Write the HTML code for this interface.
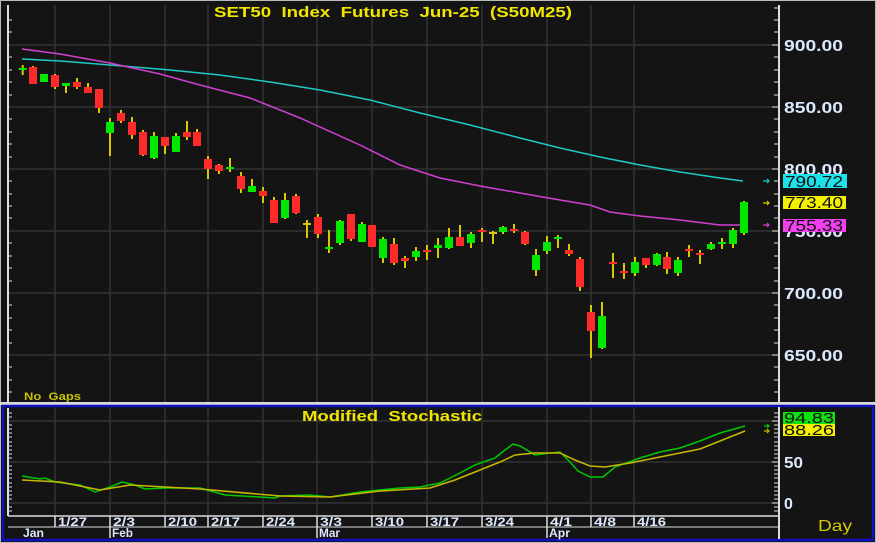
<!DOCTYPE html>
<html><head><meta charset="utf-8"><style>
html,body{margin:0;padding:0;background:#141414;}
svg{display:block;font-family:"Liberation Sans",Arial,sans-serif;font-weight:bold;}
</style></head><body>
<svg width="876" height="543" viewBox="0 0 876 543" xmlns="http://www.w3.org/2000/svg">
<rect width="876" height="543" fill="#141414"/>
<rect x="0.5" y="0.5" width="875" height="542" fill="none" stroke="#bbb"/>
<g stroke="#333" stroke-width="1.5">
<line x1="8" y1="45" x2="779" y2="45"/><line x1="8" y1="107" x2="779" y2="107"/><line x1="8" y1="169" x2="779" y2="169"/><line x1="8" y1="231" x2="779" y2="231"/><line x1="8" y1="293" x2="779" y2="293"/><line x1="8" y1="355" x2="779" y2="355"/>
<line x1="55" y1="5" x2="55" y2="403"/><line x1="110" y1="5" x2="110" y2="403"/><line x1="165" y1="5" x2="165" y2="403"/><line x1="208" y1="5" x2="208" y2="403"/><line x1="263" y1="5" x2="263" y2="403"/><line x1="317" y1="5" x2="317" y2="403"/><line x1="372" y1="5" x2="372" y2="403"/><line x1="427" y1="5" x2="427" y2="403"/><line x1="482" y1="5" x2="482" y2="403"/><line x1="547" y1="5" x2="547" y2="403"/><line x1="591" y1="5" x2="591" y2="403"/><line x1="634" y1="5" x2="634" y2="403"/>
</g>
<line x1="8" y1="5" x2="8" y2="403" stroke="#ddd" stroke-width="2"/>
<line x1="779" y1="5" x2="779" y2="403" stroke="#ddd" stroke-width="2"/>
<g stroke="#ddd" stroke-width="1">
<path d="M8 20h4M8 32h4M8 57h4M8 70h4M8 82h4M8 95h4M8 119h4M8 132h4M8 144h4M8 157h4M8 181h4M8 194h4M8 206h4M8 218h4M8 243h4M8 256h4M8 268h4M8 281h4M8 305h4M8 318h4M8 330h4M8 343h4M8 367h4M8 380h4M8 392h4"/>
<path d="M774 8h5M774 20h5M774 32h5M772 45h7M774 57h5M774 70h5M774 82h5M774 95h5M772 107h7M774 119h5M774 132h5M774 144h5M774 157h5M772 169h7M774 181h5M774 194h5M774 206h5M774 218h5M772 231h7M774 243h5M774 256h5M774 268h5M774 281h5M772 293h7M774 305h5M774 318h5M774 330h5M774 343h5M772 355h7M774 367h5M774 380h5M774 392h5"/>
</g>
<text x="214" y="17" fill="#f2e600" font-size="15" textLength="358" lengthAdjust="spacingAndGlyphs" style="white-space:pre">SET50  Index  Futures  Jun-25  (S50M25)</text>
<g fill="#dde8ff" font-size="16">
<text x="784" y="51" textLength="59" lengthAdjust="spacingAndGlyphs">900.00</text><text x="784" y="113" textLength="59" lengthAdjust="spacingAndGlyphs">850.00</text><text x="784" y="175" textLength="59" lengthAdjust="spacingAndGlyphs">800.00</text><text x="784" y="237" textLength="59" lengthAdjust="spacingAndGlyphs">750.00</text><text x="784" y="299" textLength="59" lengthAdjust="spacingAndGlyphs">700.00</text><text x="784" y="361" textLength="59" lengthAdjust="spacingAndGlyphs">650.00</text>
</g>
<text x="24" y="400" fill="#c8c000" font-size="11" textLength="57" lengthAdjust="spacingAndGlyphs" style="white-space:pre">No  Gaps</text>
<polyline fill="none" stroke="#20c8c8" stroke-width="1.5" points="22,59 60,61 110,65 170,70 220,75 270,82 320,90 370,100 420,113 470,125 520,138 560,148 600,157 640,165 680,172 720,178 743,181"/>
<polyline fill="none" stroke="#d040d0" stroke-width="1.5" points="22,49 60,54 110,63 160,74 200,85 250,98 300,118 360,145 400,165 440,178 480,186 520,193 560,200 590,205 610,212 640,216 680,220 720,225 743,225"/>
<g stroke="#d8c800" stroke-width="2">
<path d="M22.7 65V75M33 66V84M44 74V82M55 74V89M66 83V93M77 78V89M88 83V93M99 89V113M110 118V156M121 110V123M132 117V139M143 130V156M154 132V159M165 137V154M176 133V152M187 121V140M197 129V146M208 156V179M219 164V174M230 158V172M241 172V193M252 179V192M263 187V203M274 197V223M285 193V219M296 194V214M307 220V238M318 214V238M329 230V253M340 220V245M351 214V241M362 222V242M372 225V247M383 237V263M394 238V265M405 256V268M416 247V261M427 245V260M438 238V258M449 228V249M460 225V246M471 232V248M482 228V242M493 231V244M503 226V234M514 224V233M525 231V245M536 249V276M547 236V254M558 235V248M569 244V256M580 257V291M591 305V358M602 302V349M613 253V278M624 263V279M635 257V276M646 258V268M657 253V266M667 252V274M678 257V276M689 245V257M700 250V264M711 242V250M722 238V249M733 228V248M744 201V235"/>
</g>
<g fill="#00e800">
<rect x="18.7" y="68" width="8" height="2"/><rect x="40" y="74" width="8" height="8"/><rect x="62" y="83" width="8" height="3"/><rect x="106" y="122" width="8" height="11"/><rect x="150" y="136" width="8" height="22"/><rect x="172" y="136" width="8" height="16"/><rect x="226" y="167" width="8" height="2"/><rect x="248" y="186" width="8" height="6"/><rect x="281" y="200" width="8" height="18"/><rect x="325" y="247" width="8" height="2"/><rect x="336" y="221" width="8" height="22"/><rect x="358" y="224" width="8" height="18"/><rect x="379" y="239" width="8" height="19"/><rect x="412" y="251" width="8" height="6"/><rect x="434" y="245" width="8" height="3"/><rect x="445" y="237" width="8" height="11"/><rect x="467" y="234" width="8" height="9"/><rect x="499" y="227" width="8" height="5"/><rect x="532" y="255" width="8" height="15"/><rect x="543" y="242" width="8" height="9"/><rect x="554" y="237" width="8" height="2"/><rect x="598" y="316" width="8" height="32"/><rect x="631" y="262" width="8" height="11"/><rect x="653" y="254" width="8" height="11"/><rect x="674" y="260" width="8" height="13"/><rect x="707" y="244" width="8" height="5"/><rect x="718" y="242" width="8" height="2"/><rect x="729" y="230" width="8" height="14"/><rect x="740" y="202" width="8" height="31"/>
</g>
<g fill="#ff2a2a">
<rect x="29" y="67" width="8" height="17"/><rect x="51" y="75" width="8" height="12"/><rect x="73" y="82" width="8" height="5"/><rect x="84" y="87" width="8" height="6"/><rect x="95" y="89" width="8" height="19"/><rect x="117" y="113" width="8" height="8"/><rect x="128" y="122" width="8" height="13"/><rect x="139" y="132" width="8" height="23"/><rect x="161" y="137" width="8" height="9"/><rect x="183" y="132" width="8" height="5"/><rect x="193" y="132" width="8" height="14"/><rect x="204" y="159" width="8" height="10"/><rect x="215" y="165" width="8" height="6"/><rect x="237" y="176" width="8" height="13"/><rect x="259" y="191" width="8" height="5"/><rect x="270" y="200" width="8" height="23"/><rect x="292" y="196" width="8" height="17"/><rect x="314" y="217" width="8" height="17"/><rect x="347" y="214" width="8" height="25"/><rect x="368" y="225" width="8" height="22"/><rect x="390" y="244" width="8" height="19"/><rect x="401" y="258" width="8" height="3"/><rect x="423" y="250" width="8" height="2"/><rect x="456" y="237" width="8" height="9"/><rect x="478" y="230" width="8" height="2"/><rect x="510" y="229" width="8" height="2"/><rect x="521" y="232" width="8" height="12"/><rect x="565" y="250" width="8" height="4"/><rect x="576" y="259" width="8" height="28"/><rect x="587" y="312" width="8" height="19"/><rect x="609" y="262" width="8" height="2"/><rect x="620" y="271" width="8" height="2"/><rect x="642" y="258" width="8" height="7"/><rect x="663" y="257" width="8" height="12"/><rect x="685" y="249" width="8" height="2"/><rect x="696" y="253" width="8" height="2"/>
</g>
<rect x="303" y="223" width="8" height="2" fill="#d8c800"/><rect x="489" y="232" width="8" height="2" fill="#d8c800"/>
<g fill="none" stroke-width="1.2">
<path d="M763 181h6M767 179l2 2-2 2" stroke="#20c8c8"/>
<path d="M763 203h6M767 201l2 2-2 2" stroke="#d8c800"/>
<path d="M763 225h6M767 223l2 2-2 2" stroke="#d040d0"/>
</g>
<rect x="783" y="174" width="64" height="14" fill="#1ee0e8"/>
<rect x="783" y="196" width="63" height="13" fill="#f5f000"/>
<rect x="783" y="219" width="63" height="13" fill="#f040f0"/>
<g fill="#111" font-size="16" font-weight="normal">
<text x="785" y="187" textLength="58" lengthAdjust="spacingAndGlyphs">790.72</text><text x="785" y="208" textLength="58" lengthAdjust="spacingAndGlyphs">773.40</text><text x="785" y="231" textLength="58" lengthAdjust="spacingAndGlyphs">755.33</text>
</g>
<rect x="0" y="402" width="876" height="3" fill="#d8d8d8"/>
<rect x="3" y="406" width="870" height="134" fill="#141414" stroke="#1010c0" stroke-width="2.5"/>
<g stroke="#333" stroke-width="1.5">
<line x1="8" y1="421" x2="778" y2="421"/><line x1="8" y1="462" x2="778" y2="462"/><line x1="8" y1="503" x2="778" y2="503"/>
<line x1="55" y1="408" x2="55" y2="515"/><line x1="110" y1="408" x2="110" y2="515"/><line x1="165" y1="408" x2="165" y2="515"/><line x1="208" y1="408" x2="208" y2="515"/><line x1="263" y1="408" x2="263" y2="515"/><line x1="317" y1="408" x2="317" y2="515"/><line x1="372" y1="408" x2="372" y2="515"/><line x1="427" y1="408" x2="427" y2="515"/><line x1="482" y1="408" x2="482" y2="515"/><line x1="547" y1="408" x2="547" y2="515"/><line x1="591" y1="408" x2="591" y2="515"/><line x1="634" y1="408" x2="634" y2="515"/>
</g>
<line x1="8" y1="408" x2="8" y2="516" stroke="#ddd" stroke-width="2"/>
<line x1="779" y1="407" x2="779" y2="539" stroke="#ddd" stroke-width="2"/>
<g stroke="#ddd" stroke-width="1">
<path d="M8 413h4M8 417h4M8 425h4M8 429h4M8 433h4M8 437h4M8 442h4M8 446h4M8 450h4M8 454h4M8 458h4M8 466h4M8 470h4M8 474h4M8 478h4M8 483h4M8 487h4M8 491h4M8 495h4M8 499h4M8 507h4M8 511h4"/>
<path d="M774 413h5M774 417h5M772 421h7M774 425h5M774 429h5M774 433h5M774 437h5M774 442h5M774 446h5M774 450h5M774 454h5M774 458h5M772 462h7M774 466h5M774 470h5M774 474h5M774 478h5M774 483h5M774 487h5M774 491h5M774 495h5M774 499h5M772 503h7M774 507h5M774 511h5"/>
</g>
<text x="302" y="421" fill="#f2e600" font-size="15" textLength="180" lengthAdjust="spacingAndGlyphs" style="white-space:pre">Modified  Stochastic</text>
<polyline fill="none" stroke="#00c800" stroke-width="1.5" points="22,476 40,479 45,478 55,482 80,485 95,492 110,487 122,482 135,485 145,489 165,488 200,488 225,495 260,497 275,498 280,496 310,495 330,497 360,492 380,490 400,488 420,487 440,483 450,478 460,473 475,465 495,458 505,450 513,444 520,446 535,455 550,453 560,452 570,462 578,471 590,477 603,477 615,467 640,458 660,452 680,448 700,441 720,433 745,426"/>
<polyline fill="none" stroke="#c8b800" stroke-width="1.5" points="22,480 60,482 100,490 130,485 200,489 280,496 330,497 380,491 430,488 455,480 480,470 500,462 515,455 535,453 560,453 575,460 590,466 605,467 630,463 660,457 700,449 720,441 745,431"/>
<path d="M764 426h5M767 424l2 2-2 2" stroke="#00c800" fill="none" stroke-width="1.2"/>
<path d="M764 431h5M767 429l2 2-2 2" stroke="#c8b800" fill="none" stroke-width="1.2"/>
<rect x="783" y="412" width="52" height="12" fill="#10e010"/>
<rect x="783" y="424" width="52" height="12" fill="#f5f000"/>
<g fill="#111" font-size="15" font-weight="normal"><text x="784" y="423" textLength="50" lengthAdjust="spacingAndGlyphs">94.83</text><text x="784" y="435" textLength="50" lengthAdjust="spacingAndGlyphs">88.26</text></g>
<g fill="#dde8ff" font-size="16"><text x="784" y="468" textLength="19" lengthAdjust="spacingAndGlyphs">50</text><text x="784" y="509">0</text></g>
<text x="818" y="531" fill="#d8c800" font-size="16" font-weight="normal" textLength="34" lengthAdjust="spacingAndGlyphs">Day</text>
<line x1="8" y1="516" x2="778" y2="516" stroke="#ddd" stroke-width="1.5"/>
<line x1="8" y1="527" x2="778" y2="527" stroke="#ddd" stroke-width="1"/>
<g stroke="#ddd" stroke-width="1.5">
<path d="M55 516V527M110 516V527M165 516V527M208 516V527M263 516V527M317 516V527M372 516V527M427 516V527M482 516V527M547 516V527M591 516V527M634 516V527M110 527V538M317 527V538M547 527V538"/>
</g>
<g fill="#dde8ff" font-size="12" font-weight="bold">
<text x="58" y="526" textLength="29" lengthAdjust="spacingAndGlyphs">1/27</text><text x="113" y="526" textLength="22" lengthAdjust="spacingAndGlyphs">2/3</text><text x="168" y="526" textLength="29" lengthAdjust="spacingAndGlyphs">2/10</text><text x="211" y="526" textLength="29" lengthAdjust="spacingAndGlyphs">2/17</text><text x="266" y="526" textLength="29" lengthAdjust="spacingAndGlyphs">2/24</text><text x="320" y="526" textLength="22" lengthAdjust="spacingAndGlyphs">3/3</text><text x="375" y="526" textLength="29" lengthAdjust="spacingAndGlyphs">3/10</text><text x="430" y="526" textLength="29" lengthAdjust="spacingAndGlyphs">3/17</text><text x="485" y="526" textLength="29" lengthAdjust="spacingAndGlyphs">3/24</text><text x="550" y="526" textLength="22" lengthAdjust="spacingAndGlyphs">4/1</text><text x="594" y="526" textLength="22" lengthAdjust="spacingAndGlyphs">4/8</text><text x="637" y="526" textLength="29" lengthAdjust="spacingAndGlyphs">4/16</text>
<text x="23" y="537" textLength="21" lengthAdjust="spacingAndGlyphs">Jan</text><text x="112" y="537" textLength="21" lengthAdjust="spacingAndGlyphs">Feb</text><text x="319" y="537" textLength="21" lengthAdjust="spacingAndGlyphs">Mar</text><text x="549" y="537" textLength="21" lengthAdjust="spacingAndGlyphs">Apr</text>
</g>
</svg>
</body></html>
